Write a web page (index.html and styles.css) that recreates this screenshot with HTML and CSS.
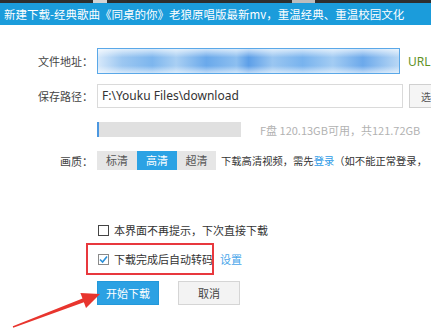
FILE: index.html
```html
<!DOCTYPE html>
<html lang="zh">
<head>
<meta charset="utf-8">
<title>新建下载</title>
<link rel="stylesheet" href="styles.css">
</head>
<body>
<div class="topstrip"></div>
<div class="titlebar">新建下载-经典歌曲《同桌的你》老狼原唱版最新mv，重温经典、重温校园文化</div>
<div class="form">
  <div class="row r1">
    <span class="lbl">文件地址：</span>
    <div class="url-input"></div>
    <span class="url">URL</span>
  </div>
  <div class="row r2">
    <span class="lbl">保存路径：</span>
    <div class="path-input">F:\Youku Files\download</div>
    <button class="browse">选</button>
  </div>
  <div class="row r3">
    <span class="lbl"></span>
    <div class="disk"><span class="disk-used" style="width:2px"></span></div>
    <span class="disk-text">F盘 120.13GB可用，共121.72GB</span>
  </div>
  <div class="row r4">
    <span class="lbl">画质：</span>
    <div class="seg"><span>标清</span><span class="on">高清</span><span>超清</span></div>
    <span class="hint">下载高清视频，需先<a class="link">登录</a>（如不能正常登录，</span>
  </div>
</div>
<div class="checks">
  <div class="check c1"><span class="box"></span>本界面不再提示，下次直接下载</div>
  <div class="check c2"><span class="box checked"><svg width="9" height="9" viewBox="0 0 9 9"><polyline points="1,4.5 3.6,7 8,1.5" fill="none" stroke="#2a8fd8" stroke-width="1.6"/></svg></span>下载完成后自动转码<a class="set">设置</a></div>
</div>
<div class="actions">
  <button class="btn primary">开始下载</button>
  <button class="btn cancel">取消</button>
</div>
<svg class="arrow" width="431" height="333" viewBox="0 0 431 333">
  <polygon points="12.8,326.3 82.5,298.5 80.4,292.9 100,294 86,307.9 83.9,302.3 13.2,327.7" fill="#e8352e"/>
</svg>
</body>
</html>
```
FILE: styles.css
```css
html, body {
  margin: 0;
  padding: 0;
}
body {
  width: 431px;
  height: 333px;
  overflow: hidden;
  background: #fff;
  font-family: "Noto Sans CJK SC", "Noto Sans", sans-serif;
  font-size: 11px;
  color: #333;
  position: relative;
}
.topstrip {
  height: 3px;
  background: linear-gradient(to right, #2e2e2e 0 93px, #d4d4d4 93px 107px, #2e2e2e 107px 292px, #bdbdbd 292px 315px, #2e2e2e 315px);
}
.titlebar {
  height: 22px;
  line-height: 22px;
  background: #1b9cdb;
  color: #fff;
  padding-left: 4px;
  white-space: nowrap;
  overflow: hidden;
  font-size: 11.5px;
}
.form {
  padding-top: 23px;
}
.row {
  display: flex;
  align-items: center;
  white-space: nowrap;
}
.lbl {
  width: 93px;
  flex: none;
  text-align: right;
  margin-right: 4px;
  color: #444;
}
.r1 { height: 26px; }
.url-input {
  flex: none;
  width: 303px;
  height: 26px;
  box-sizing: border-box;
  border: 1px solid #5aa8e8;
  background:
    linear-gradient(to bottom, rgba(255,255,255,0.7) 0, rgba(255,255,255,0) 35%, rgba(255,255,255,0) 70%, rgba(255,255,255,0.6) 100%),
    linear-gradient(to right, #d6e8fa 0, #9cc7f1 8%, #7db6ee 18%, #a9cff3 26%, #6aa9eb 36%, #8dbff0 46%, #5d9fe8 50%, #9ac6f1 58%, #78b3ee 68%, #a3ccf3 78%, #6ca9eb 88%, #b9d8f5 100%);
}
.url {
  margin-left: 8px;
  color: #5f9226;
  font-family: "Noto Sans", sans-serif;
  font-size: 12px;
}
.r2 {
  margin-top: 10px;
  height: 24px;
}
.path-input {
  flex: none;
  width: 306px;
  height: 24px;
  box-sizing: border-box;
  border: 1px solid #dadada;
  padding-left: 4px;
  line-height: 22px;
  font-family: "Noto Sans", "Noto Sans CJK SC", sans-serif;
  font-size: 12px;
  color: #333;
}
.browse {
  flex: none;
  margin-left: 6px;
  width: 22px;
  height: 24px;
  border: 1px solid #d0d0d0;
  border-right: none;
  background: #f5f5f5;
  color: #555;
  font: inherit;
  font-size: 10px;
  text-align: left;
  padding: 0 0 0 11px;
  overflow: hidden;
}
.r3 {
  margin-top: 14px;
  height: 15px;
}
.disk {
  flex: none;
  width: 144px;
  height: 15px;
  background: #e0e0e0;
  display: flex;
}
.disk-used {
  display: block;
  height: 100%;
  background: #4b97e0;
}
.disk-text {
  margin-left: 19px;
  color: #b2b2b2;
}
.r4 {
  margin-top: 14px;
  height: 19px;
}
.seg {
  display: flex;
  flex: none;
}
.seg span {
  width: 40px;
  height: 19px;
  line-height: 19px;
  text-align: center;
  background: #e6e6e6;
  color: #555;
}
.seg span:last-child { width: 39px; }
.seg .on {
  background: #2ba2e4;
  color: #fff;
}
.hint {
  margin-left: 5px;
  color: #333;
  font-size: 10.3px;
}
.link { color: #2f9be6; }
.checks {
  padding-left: 98px;
  margin-top: 51px;
}
.check {
  display: flex;
  align-items: center;
  height: 18px;
  position: relative;
  white-space: nowrap;
  color: #333;
}
.box {
  flex: none;
  width: 11px;
  height: 11px;
  box-sizing: border-box;
  border: 1px solid #444;
  margin-right: 5px;
  background: #fff;
  display: flex;
  align-items: center;
  justify-content: center;
}
.box.checked { border-color: #8a8a8a; }
.c2 { margin-top: 11px; }
.c2::before {
  content: "";
  position: absolute;
  left: -12px;
  top: -7px;
  width: 128px;
  height: 32px;
  box-sizing: border-box;
  border: 2px solid #e8383d;
}
.set {
  margin-left: 7px;
  color: #49a6ea;
}
.actions {
  display: flex;
  padding-left: 97px;
  margin-top: 13px;
  gap: 19px;
}
.btn {
  width: 62px;
  height: 24px;
  box-sizing: border-box;
  font: inherit;
  padding: 0;
}
.primary {
  background: #2ba1e3;
  border: 1px solid #2398da;
  color: #fff;
}
.cancel {
  background: #f3f3f3;
  border: 1px solid #d5d5d5;
  color: #444;
}
.arrow {
  position: absolute;
  left: 0;
  top: 0;
  pointer-events: none;
}
```
